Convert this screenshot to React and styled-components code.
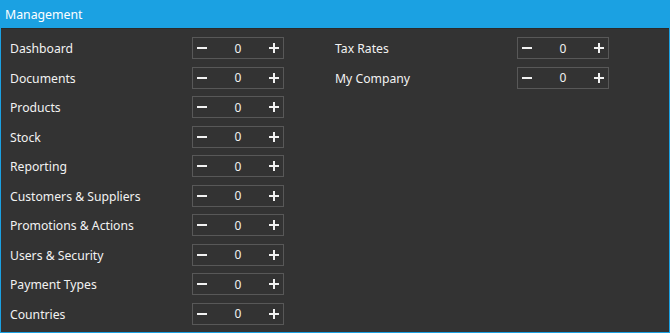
import React from 'react'
import styled, { createGlobalStyle } from 'styled-components'

const Global = createGlobalStyle`
  html, body { margin:0; padding:0; background:#333333; }
  body { font-family:"Noto Sans","Open Sans",sans-serif; }
`

const Panel = styled.div`
  width:670px;
  height:333px;
  box-sizing:border-box;
  border:1px solid #1ba1e2;
  border-top:none;
  background:#333333;
  display:flex;
  flex-direction:column;
`
const Header = styled.div`
  height:28px;
  background:#1ba1e2;
  color:white;
  font-size:12.3px;
  display:flex;
  align-items:center;
  padding-left:4px;
  border-bottom:1px solid #2a2a2a;
`
const Body = styled.div`
  display:flex;
  padding:4.5px 0 0 9px;
`
const Column = styled.div`
  width:325px;
  display:flex;
  flex-direction:column;
`
const Row = styled.div`
  height:29.5px;
  display:grid;
  grid-template-columns:182px 92px;
  align-items:center;
`
const Label = styled.div`
  color:#f2f2f2;
  font-size:12.2px;
  padding-top:1px;
`
const Spinner = styled.div`
  height:22px;
  box-sizing:border-box;
  border:1px solid #585858;
  display:flex;
  align-items:center;
  justify-content:space-between;
  color:#f2f2f2;
  font-size:12px;
`
const Btn = styled.div`
  width:20px;
  height:100%;
  display:flex;
  align-items:center;
  justify-content:center;
  margin:${p => p.$left ? '0 0 0 -1px' : '0 -1px 0 0'};
`

const Minus = () => (
  <svg width="10" height="10" viewBox="0 0 10 10">
    <rect x="0" y="4" width="10" height="2" fill="#f2f2f2" />
  </svg>
)
const Plus = () => (
  <svg width="10" height="10" viewBox="0 0 10 10">
    <rect x="0" y="4" width="10" height="2" fill="#f2f2f2" />
    <rect x="4" y="0" width="2" height="10" fill="#f2f2f2" />
  </svg>
)

const Item = ({ name }) => (
  <Row>
    <Label>{name}</Label>
    <Spinner>
      <Btn $left><Minus /></Btn>
      <span>0</span>
      <Btn><Plus /></Btn>
    </Spinner>
  </Row>
)

const left = ['Dashboard', 'Documents', 'Products', 'Stock', 'Reporting',
  'Customers & Suppliers', 'Promotions & Actions', 'Users & Security',
  'Payment Types', 'Countries']
const right = ['Tax Rates', 'My Company']

export default function App() {
  return (
    <>
      <Global />
      <Panel>
        <Header>Management</Header>
        <Body>
          <Column>{left.map(n => <Item key={n} name={n} />)}</Column>
          <Column>{right.map(n => <Item key={n} name={n} />)}</Column>
        </Body>
      </Panel>
    </>
  )
}
